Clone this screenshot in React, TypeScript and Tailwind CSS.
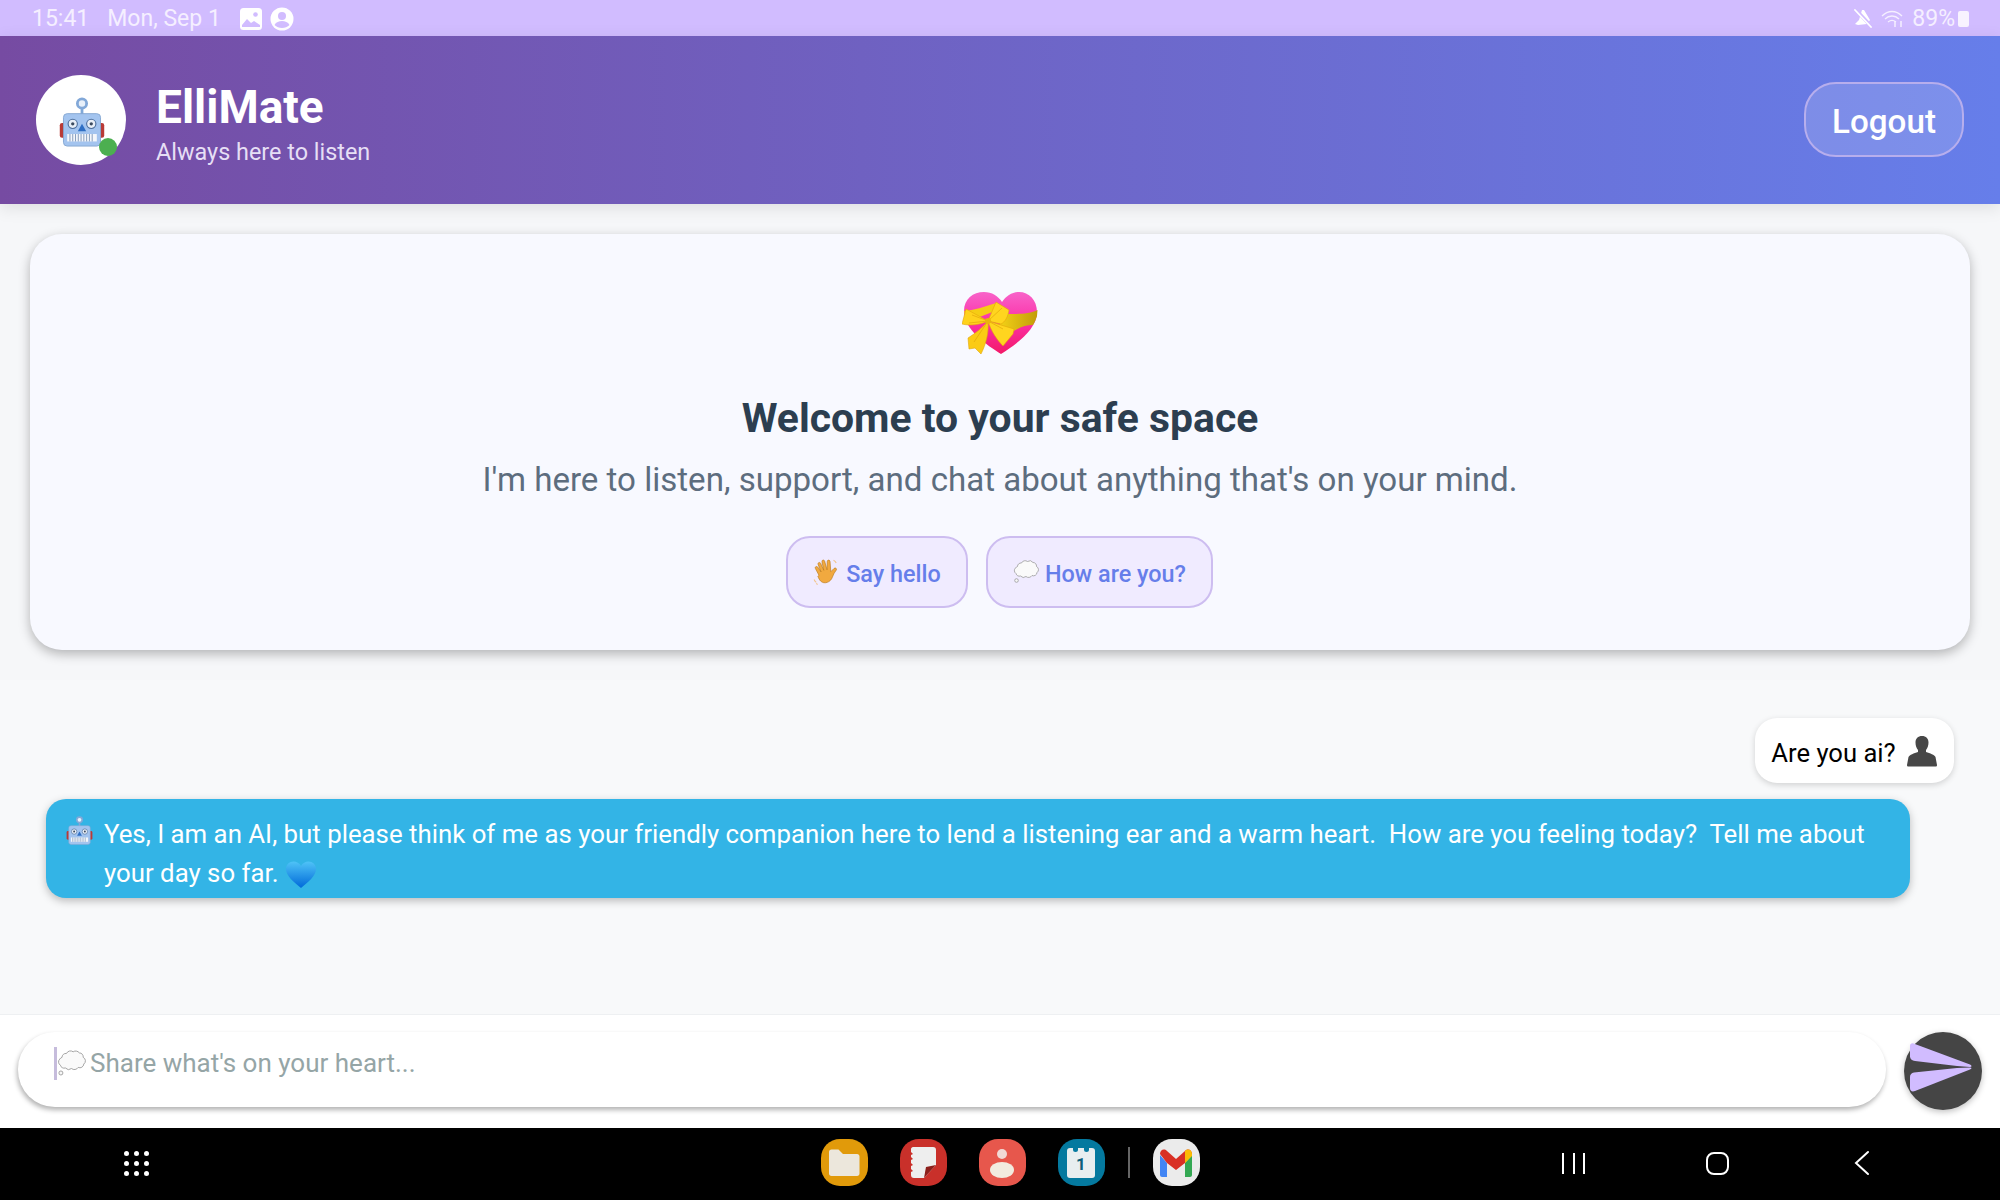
import React from "react";

function Robot({ size }: { size: number }) {
  return (
    <svg width={size} height={size} viewBox="0 0 48 54" className="shrink-0">
      <rect x="0" y="28" width="8" height="16" rx="2.500" fill="#b93a36" />
      <rect x="40" y="28" width="8" height="16" rx="2.500" fill="#b93a36" />
      <rect x="22.500" y="11" width="3" height="8" fill="#7fa8d8" />
      <circle cx="24" cy="7" r="5" fill="#e8f0fa" stroke="#82a8d8" strokeWidth="3" />
      <rect x="4" y="18" width="40" height="35" rx="4" fill="#a3c4ef" stroke="#84a6d2" strokeWidth="1" />
      <circle cx="14" cy="29" r="5" fill="#e8eef6" stroke="#4d6f9d" strokeWidth="1.200" />
      <circle cx="34" cy="29" r="5" fill="#e8eef6" stroke="#4d6f9d" strokeWidth="1.200" />
      <circle cx="14" cy="29" r="1.800" fill="#3b4a5e" />
      <circle cx="34" cy="29" r="1.800" fill="#3b4a5e" />
      <path d="M24 29l4.500 8h-9z" fill="#2f6fc4" />
      <rect x="8" y="40" width="32" height="8" fill="#f4f7fb" />
      <path d="M11 40v8M14 40v8M17 40v8M20 40v8M23 40v8M26 40v8M29 40v8M32 40v8M35 40v8" stroke="#7f97b8" strokeWidth="1" />
    </svg>
  );
}

function GiftHeart() {
  return (
    <svg width="76" height="63" viewBox="0 0 76 63">
      <defs>
        <linearGradient id="gh" x1="0" y1="0" x2="0" y2="1">
          <stop offset="0" stopColor="#f863c9" />
          <stop offset="0.5" stopColor="#fb2fa6" />
          <stop offset="1" stopColor="#f31a68" />
        </linearGradient>
        <linearGradient id="band" x1="0" y1="0" x2="1" y2="0">
          <stop offset="0" stopColor="#f5d317" />
          <stop offset="1" stopColor="#c29c0a" />
        </linearGradient>
      </defs>
      <path d="M39 62C25 53 2 38 2 19 2 7 11 0 22 0c8 0 14 4 18 10C44 4 50 0 57 0c10 0 18 8 18 20 0 18-22 33-36 42z" fill="url(#gh)" />
      <path d="M40 22h12c8 0 18-1 23.500-4L75 24c-1 3-2 6-4 9-7 0-13 2-21 7l-14 2z" fill="url(#band)" />
      <path d="M2 19c10-1 20-4 32-8l4 6L5 30z" fill="#f5cd14" />
      <path d="M26 29L34 10l13 8c-1 7-4 12-8 14z" fill="#ffd51f" stroke="#e2a60a" strokeWidth=".6" />
      <path d="M26 29L4 17 0 32c8 2 18 1 26-3z" fill="#ffd21c" stroke="#e2a60a" strokeWidth=".6" />
      <path d="M26 29l26 8-1 5-10 12c-6-6-12-15-15-25z" fill="#ffd51f" stroke="#e2a60a" strokeWidth=".6" />
      <path d="M26 29C21 35 14 41 6 46l1 11 6-1 6 6c5-10 8-21 7-33z" fill="#fbcb14" stroke="#e2a60a" strokeWidth=".6" />
      <path d="M26 29L10 23M26 29l14-13M26 29l15 8M26 29L12 50M26 29l-19 2" stroke="#e2a60a" strokeWidth=".7" fill="none" />
      <circle cx="26" cy="29" r="3" fill="#eab30d" />
    </svg>
  );
}

function Wave() {
  return (
    <svg width="27" height="28" viewBox="0 0 25 26" className="shrink-0">
      <path d="M5.500 16L2.200 9.800c-.8-1.700 1.300-2.700 2.300-1.200L7.500 13 4.700 6c-.6-1.800 1.600-2.600 2.400-1L10 11.500 8.300 3.600c-.3-1.900 2-2.300 2.500-.6L13 11l.2-7.700c.1-1.800 2.400-1.800 2.600 0l.7 9.400 3-3c1.300-1.200 3 .2 2 1.600-1.500 2-2.700 4-3.500 6.400-1.700 5-7.600 7-11 3.700-1-1-1.700-2.500-2.500-4.400z" fill="#f1a93f" stroke="#b97a1a" strokeWidth=".6" />
      <path d="M19 2c1.200.5 2 1.400 2.500 2.700M1 20c.4 1.200 1.100 2 2 2.600M3 23.500c.4.500.8.800 1.300 1" stroke="#f3c48a" strokeWidth="1" fill="none" />
    </svg>
  );
}

function Thought({ w = 26 }: { w?: number }) {
  return (
    <svg width={w} height={w} viewBox="0 0 26 26" className="shrink-0">
      <path d="M4.500 7.500a3.500 3.500 0 0 1 4-3.500 4 4 0 0 1 6-1.500 4 4 0 0 1 5.500 1 3.500 3.500 0 0 1 3.500 4 3.500 3.500 0 0 1 .5 6 3.500 3.500 0 0 1-5 3 4 4 0 0 1-6 1 4 4 0 0 1-5.500-.5 3.500 3.500 0 0 1-4.500-2.500 3.500 3.500 0 0 1-.5-5.500 3.500 3.500 0 0 1 2-1.500z" fill="#fafafa" stroke="#9a9a9a" strokeWidth=".8" />
      <circle cx="3.500" cy="21.500" r="1.800" fill="#f7f7f7" stroke="#8f8f8f" strokeWidth=".7" />
    </svg>
  );
}

function BlueHeart() {
  return (
    <svg width="32" height="28" viewBox="0 0 32 28" className="inline-block align-[-7px]">
      <defs>
        <linearGradient id="bh" x1="0" y1="0" x2="0" y2="1">
          <stop offset="0" stopColor="#4fc3f7" />
          <stop offset="1" stopColor="#0069d9" />
        </linearGradient>
      </defs>
      <path d="M16 27C9 21 1 15 1 8c0-4.500 3.500-7.500 7.500-7.500C11.500.5 14.500 2 16 5c1.500-3 4.500-4.500 7.500-4.500C27.500.5 31 3.500 31 8c0 7-8 13-15 19z" fill="url(#bh)" />
    </svg>
  );
}

function Person() {
  return (
    <svg width="32" height="32" viewBox="0 0 32 32" className="shrink-0">
      <path d="M16 1c4 0 6.500 2.500 6.500 6.500 0 3-1 5.500-2.500 7.500v2c4 1.500 8.500 2.500 9.500 5L31 30c0 1-.5 1.500-1.500 1.500h-27C1.500 31.500 1 31 1 30l1.500-8c1-2.500 5.500-3.500 9.500-5v-2C10.500 13 9.500 10.500 9.500 7.500 9.500 3.500 12 1 16 1z" fill="#474747" />
    </svg>
  );
}

function Squircle({ bg, children }: { bg: string; children: React.ReactNode }) {
  return (
    <div className={`w-[47px] h-[47px] rounded-[19px] flex items-center justify-center shrink-0 ${bg}`}>
      {children}
    </div>
  );
}

export default function App() {
  return (
    <div className="w-[2000px] h-[1200px] flex flex-col overflow-hidden bg-[#f8f9fa] font-['Roboto',sans-serif]">
      {/* status bar */}
      <div className="h-9 shrink-0 bg-[#d1bcff] flex items-center justify-between pl-8 pr-[31px] pt-[2px] text-[#f5efff] text-[23px]">
        <div className="flex items-center">
          <span>15:41</span>
          <span className="ml-[18px]">Mon, Sep 1</span>
          <svg width="22" height="22" viewBox="0 0 22 22" className="ml-[19px]">
            <rect width="22" height="22" rx="3.500" fill="#fff" />
            <circle cx="15.500" cy="6.500" r="2.300" fill="#d1bcff" />
            <path d="M2 17l5-6 4 4 3-2 6 4v2H2z" fill="#d1bcff" />
          </svg>
          <svg width="24" height="24" viewBox="0 0 24 24" className="ml-[8px]">
            <circle cx="12" cy="12" r="11.500" fill="#fff" />
            <circle cx="12" cy="9" r="4" fill="#d1bcff" />
            <path d="M4.500 18c1.500-3 4.500-4 7.500-4s6 1 7.500 4c-2 2-4.500 3-7.500 3s-5.500-1-7.500-3z" fill="#d1bcff" />
          </svg>
        </div>
        <div className="flex items-center">
          <svg width="20" height="20" viewBox="0 0 20 20">
            <path d="M9 1l2 0 6 10-3 4-9 1-3-1 4-4z" fill="#fff" />
            <path d="M3 1l15 16" stroke="#d1bcff" strokeWidth="3.500" />
            <path d="M2 1l16 17" stroke="#fff" strokeWidth="1.800" strokeLinecap="round" />
          </svg>
          <svg width="24" height="20" viewBox="0 0 24 20" className="ml-[8px]" fill="none" stroke="#f5efff" strokeWidth="1.300">
            <path d="M1 7c6-6 14-6 20 0M4 10c4-4 10-4 14 0M7 13c2.500-2 5.500-2 8 0" />
            <path d="M14 12v6M20 18v-6" strokeWidth="1.500" />
          </svg>
          <span className="ml-[7px]">89%</span>
          <div className="w-[11px] h-[16px] bg-[#f8f3ff] ml-[3px] rounded-[2px]" />
        </div>
      </div>

      {/* header */}
      <header className="h-[168px] shrink-0 bg-[linear-gradient(90deg,#764ba2_0%,#667eea_100%)] flex items-center justify-between pl-9 pr-9 shadow-[0_4px_16px_rgba(0,0,0,0.1)] relative z-10">
        <div className="flex items-center gap-[30px]">
          <div className="relative w-[90px] h-[90px] bg-white rounded-full flex items-center justify-center">
            <div className="pt-[4px] pl-[1px]"><Robot size={50} /></div>
            <div className="absolute right-[9px] bottom-[9px] w-[18px] h-[18px] rounded-full bg-[#4caf50]" />
          </div>
          <div className="flex flex-col pt-[8px]">
            <div className="text-[46px] leading-[52px] font-bold text-white">ElliMate</div>
            <div className="text-[23.400px] leading-[30px] text-[#e6dff5] mt-[4px]">Always here to listen</div>
          </div>
        </div>
        <button className="w-[160px] h-[75px] mb-[2px] pt-[5px] rounded-[32px] border-[2.500px] border-[#b7aeed] bg-white/15 text-white text-[33.200px] font-medium">
          Logout
        </button>
      </header>

      {/* welcome */}
      <div className="shrink-0 px-[30px] pt-[30px] pb-[30px] bg-[#f6f7f9]">
        <section className="h-[416px] rounded-[32px] bg-[#f8f9ff] shadow-[0_4px_12px_rgba(0,0,0,0.28)] flex flex-col items-center pt-[58px]">
          <GiftHeart />
          <h2 className="text-[40.900px] leading-[48px] font-bold text-[#2c3e50] mt-[39px]">Welcome to your safe space</h2>
          <p className="text-[33.100px] leading-[44px] text-[#5d6d7e] mt-[16px]">I'm here to listen, support, and chat about anything that's on your mind.</p>
          <div className="flex gap-[18px] mt-[34px] mr-[1px]">
            <button className="h-[72px] w-[182px] rounded-[24px] border-[2.500px] border-[#cdbdf0] bg-[#f0ebff] text-[#667eea] text-[23.400px] font-medium flex items-center justify-center gap-[6px]">
              <Wave />
              <span className="pt-[5px]">Say hello</span>
            </button>
            <button className="h-[72px] w-[227px] rounded-[24px] border-[2.500px] border-[#cdbdf0] bg-[#f0ebff] text-[#667eea] text-[23.400px] font-medium flex items-center justify-center gap-[6px]">
              <Thought />
              <span className="pt-[5px]">How are you?</span>
            </button>
          </div>
        </section>
      </div>

      {/* messages */}
      <main className="flex-1 flex flex-col pt-[38px] bg-[#f8f9fa]">
        <div className="flex justify-end pr-[46px]">
          <div className="h-[65px] w-[199px] bg-white rounded-[22px] shadow-[0_2px_6px_rgba(0,0,0,0.16)] flex items-center justify-center gap-[10px] text-black text-[25.600px]">
            <span className="pt-[5px]">Are you ai?</span>
            <Person />
          </div>
        </div>
        <div className="ml-[46px] mt-[16px] w-[1864px] h-[99px] rounded-[20px] bg-[#33b4e6] shadow-[0_3px_8px_rgba(0,0,0,0.25)] flex gap-[10px] pl-[19px] pt-[16px] text-white text-[25.800px] leading-[39px]">
          <div className="pt-[1px]"><Robot size={29} /></div>
          <div className="w-[1800px]">
            Yes, I am an AI, but please think of me as your friendly companion here to lend a listening ear and a warm heart.&nbsp; How are you feeling today?&nbsp; Tell me about your day so far. <BlueHeart />
          </div>
        </div>
      </main>

      {/* input */}
      <div className="h-[114px] shrink-0 bg-white flex items-start pt-[17px] pl-[18px] border-t border-[#eef0f2] gap-[18px]">
        <div className="w-[1868px] h-[75px] rounded-[37px] bg-white shadow-[-1px_3px_5px_rgba(0,0,0,0.3)] flex items-center pl-[36px] pb-[12px] text-[26px] text-[#95a5a6]">
          <div className="w-[3px] h-[33px] bg-[#c6bcdc]" />
          <Thought w={29} />
          <span className="ml-[4px]">Share what's on your heart...</span>
        </div>
        <button className="w-[78px] h-[78px] rounded-full bg-[#454545] shadow-[0_2px_6px_rgba(0,0,0,0.25)]">
          <svg width="78" height="78" viewBox="0 0 78 78">
            <path d="M6 14c0-2 1.500-3 3.500-2.500L66 32.500c2 1 2 2.500 0 2.500L53 34 11 29c-3-.5-5-2-5-4.500z" fill="#d1bcff" />
            <path d="M6 45c0-2.500 1.500-4 4-4.500L53 36l13-.5c2 0 2 1 0 2L11 59c-3 1-5 0-5-3z" fill="#d1bcff" />
          </svg>
        </button>
      </div>

      {/* nav */}
      <nav className="h-[72px] shrink-0 bg-black relative flex items-center justify-center pb-[3px]">
        <div className="absolute left-[124px] top-[23px] grid grid-cols-3 gap-[5px]">
          {Array.from({ length: 9 }).map((_, i) => (
            <div key={i} className="w-[5px] h-[5px] rounded-full bg-white" />
          ))}
        </div>
        <div className="flex items-center gap-[32px] ml-[20px]">
          <Squircle bg="bg-[#e19a0a]">
            <svg width="32" height="28" viewBox="0 0 32 28">
              <path d="M1 3c0-1.500 1-2.500 2.500-2.500h7L15 5h14c1.500 0 2.500 1 2.500 2.500v17c0 1.500-1 2.500-2.500 2.500H3.500C2 27 1 26 1 24.500z" fill="#ece7dc" />
            </svg>
          </Squircle>
          <Squircle bg="bg-[#c9302a]">
            <svg width="30" height="32" viewBox="0 0 30 32">
              <path d="M3 2c0-1 1-2 2-2h20c2 0 3 1 3 3v15L16 31H6c-2 0-3-1-3-3v-3l2-1-2-2v-3l2-1-2-2v-3l2-1-2-2V8l2-1-2-2z" fill="#eeeeee" />
              <path d="M16 31l2-11 10-2z" fill="#8c1f1b" />
            </svg>
          </Squircle>
          <Squircle bg="bg-[#e7574c]">
            <svg width="28" height="32" viewBox="0 0 28 32">
              <circle cx="14" cy="7" r="5" fill="#f1d9d5" />
              <ellipse cx="14" cy="23" rx="12" ry="8" fill="#f2ebdf" />
            </svg>
          </Squircle>
          <Squircle bg="bg-[#04799f]">
            <div className="relative w-[28px] h-[30px] rounded-[3px] bg-[#e8eef0] flex items-center justify-center text-[#0b5f7c] text-[17px] font-bold pt-1">
              1
              <div className="absolute left-[6px] top-0 w-[5px] h-[4px] bg-[#04799f] rounded-b-full" />
              <div className="absolute right-[6px] top-0 w-[5px] h-[4px] bg-[#04799f] rounded-b-full" />
            </div>
          </Squircle>
          <div className="w-[2px] h-[31px] bg-[#666] -mx-[9px]" />
          <Squircle bg="bg-[#ebebeb]">
            <svg width="34" height="28" viewBox="0 0 34 28">
              <path d="M1 6v20c0 1 1 2 2 2h5V14z" fill="#4285f4" />
              <path d="M33 6v20c0 1-1 2-2 2h-5V14z" fill="#34a853" />
              <path d="M1 5c0-4 4-6 7-3l9 8 9-8c3-3 7-1 7 3l-7 9-9 7-9-7z" fill="#d93025" />
              <path d="M26 2c3-3 7-1 7 3v2l-7 7z" fill="#fbbc04" />
            </svg>
          </Squircle>
        </div>
        <div className="absolute left-[1562px] top-[25px] flex gap-[8.500px]">
          <div className="w-[2px] h-[21px] bg-white" />
          <div className="w-[2px] h-[21px] bg-white" />
          <div className="w-[2px] h-[21px] bg-white" />
        </div>
        <div className="absolute left-[1706px] top-[24px] w-[23px] h-[23px] rounded-[8px] border-2 border-white" />
        <svg width="16" height="26" viewBox="0 0 16 26" className="absolute left-[1854px] top-[22px]" fill="none" stroke="#fff" strokeWidth="2" strokeLinecap="round">
          <path d="M14 2L2 13l12 11" />
        </svg>
      </nav>
    </div>
  );
}
